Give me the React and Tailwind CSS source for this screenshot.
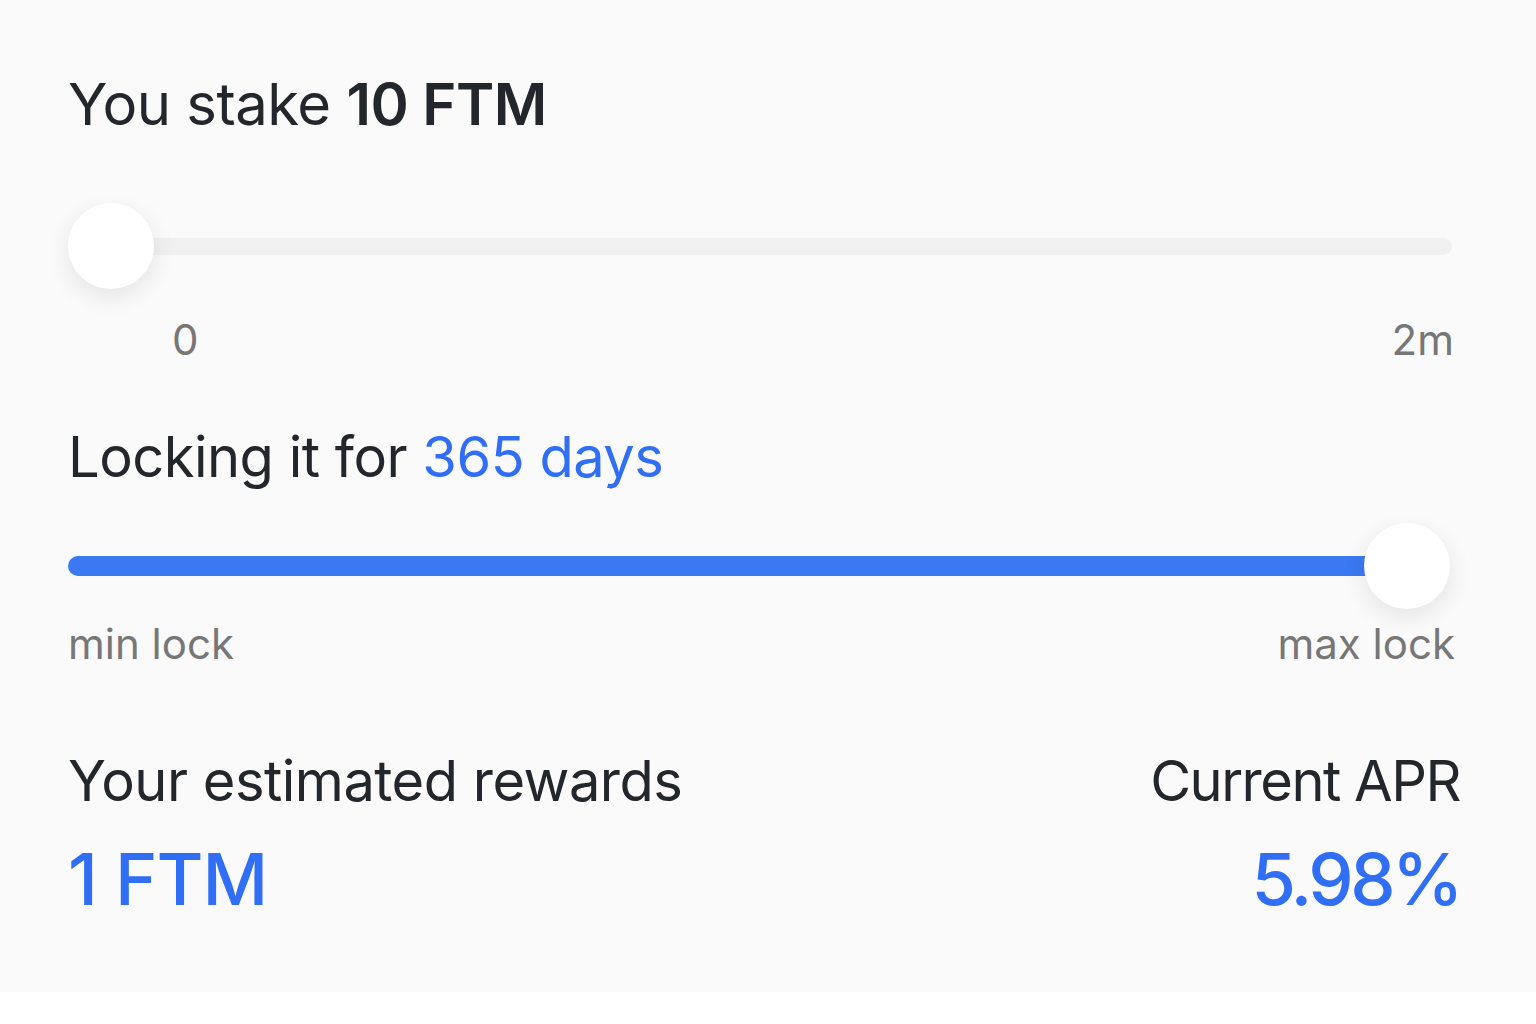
import React from 'react';

const font = { fontFamily: 'Inter, "Noto Sans", sans-serif' };

function Thumb() {
  return (
    <div className="h-[86px] w-[86px] rounded-full bg-white shadow-[0_8px_24px_rgba(0,0,0,0.09)]" />
  );
}

export default function App() {
  return (
    <div className="min-h-screen bg-white" style={font}>
      <div className="h-[992px] bg-[#fafafa] px-[68px] pt-[68px]">
        {/* stake amount */}
        <h1 className="text-[58px] leading-[72px] tracking-[-0.5px] text-[#23262b]">
          You stake <span className="font-semibold">10 FTM</span>
        </h1>

        <div className="relative mt-[63px] flex h-[86px] items-center">
          <div className="ml-[42px] mr-[16px] h-[17px] flex-1 rounded-full bg-[#f0f0f0]" />
          <div className="absolute left-0 top-0">
            <Thumb />
          </div>
        </div>
        <div className="mt-[28px] flex justify-between pl-[104px] text-[42px] leading-[46px] text-[#777]">
          <span>0</span>
          <span className="mr-[14px]">2m</span>
        </div>

        {/* lock period */}
        <h2 className="mt-[58px] text-[56px] leading-[72px] tracking-[-0.5px] text-[#23262b]">
          Locking it for <span className="text-[#2f6ef5]">365 days</span>
        </h2>

        <div className="relative mt-[30px] flex h-[86px] items-center">
          <div className="mr-[60px] h-[20px] flex-1 rounded-full bg-[#3b79f2]" />
          <div className="absolute right-[18px] top-0">
            <Thumb />
          </div>
        </div>
        <div className="mt-[12px] mr-[13px] flex justify-between text-[42px] leading-[46px] text-[#777]">
          <span>min lock</span>
          <span>max lock</span>
        </div>

        {/* rewards */}
        <div className="mt-[82px] mr-[8px] flex justify-between">
          <div>
            <div className="text-[56px] leading-[64px] tracking-[-0.5px] text-[#23262b]">Your estimated rewards</div>
            <div className="mt-[26px] text-[72px] leading-[80px] font-medium tracking-[-1px] text-[#2f6ef5]">1 FTM</div>
          </div>
          <div className="text-right">
            <div className="text-[56px] leading-[64px] tracking-[-1.5px] text-[#23262b]">Current APR</div>
            <div className="mt-[26px] text-[72px] leading-[80px] font-medium tracking-[-3.5px] text-[#2f6ef5]">5.98%</div>
          </div>
        </div>
      </div>
    </div>
  );
}
